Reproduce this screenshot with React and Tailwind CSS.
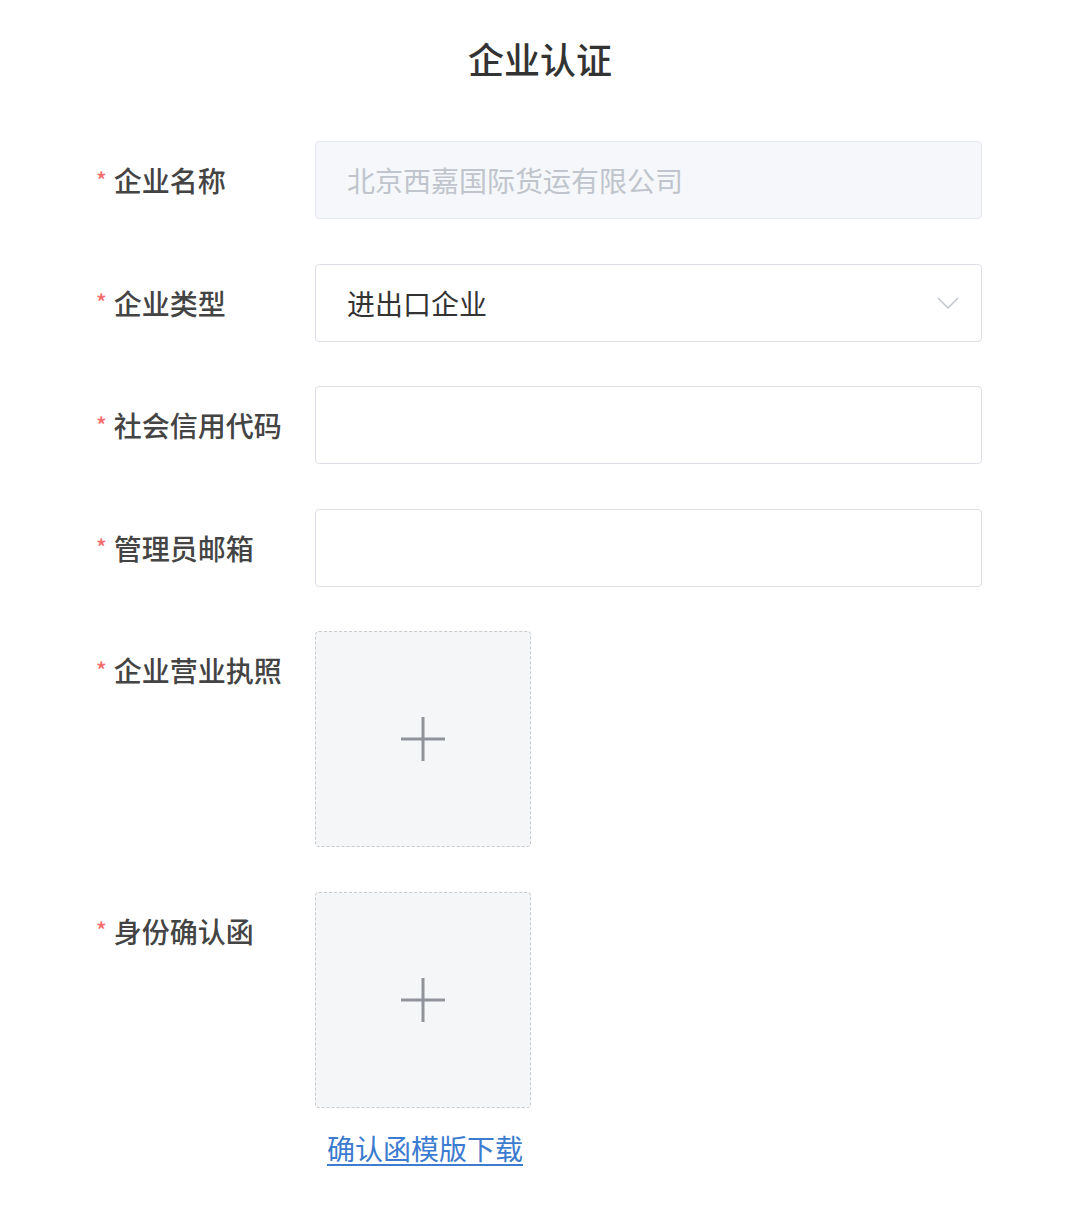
import React from 'react';

const font = { fontFamily: '"Noto Sans CJK SC", "Noto Sans", sans-serif' };

function Label({ children }) {
  return (
    <div className="w-[219px] shrink-0 h-[78px] flex items-center text-[28px] text-[#444] font-medium">
      <span className="text-[#f56c6c] text-[22px] mr-[7px] -mt-[2px]">*</span>
      {children}
    </div>
  );
}

function Upload() {
  return (
    <div className="w-[216px] h-[216px] bg-[#f5f6f8] border border-dashed border-[#c8cbd0] rounded-[4px] flex items-center justify-center">
      <svg width="46" height="46" viewBox="0 0 46 46">
        <path d="M23 1v44M1 23h44" stroke="#909399" strokeWidth="3" fill="none" />
      </svg>
    </div>
  );
}

export default function App() {
  return (
    <div className="w-[1080px] min-h-[1212px] bg-white" style={font}>
      <h1 className="text-center text-[36px] text-[#333] pt-[35px] leading-[46px] font-medium">企业认证</h1>

      <div className="pl-[96px] pt-[60px] flex flex-col gap-[44.6px]">
        <div className="flex">
          <Label>企业名称</Label>
          <div className="w-[667px] h-[78px] bg-[#f5f7fa] border border-[#e4e7ed] rounded-[4px] flex items-center pl-[31px] text-[28px] text-[#c0c4cc]">
            北京西嘉国际货运有限公司
          </div>
        </div>

        <div className="flex">
          <Label>企业类型</Label>
          <div className="w-[667px] h-[78px] border border-[#dcdfe6] rounded-[4px] flex items-center justify-between pl-[31px] pr-[22px] text-[28px] text-[#333]">
            <span>进出口企业</span>
            <svg width="22" height="14" viewBox="0 0 22 14">
              <path d="M1 2l10 10 10-10" stroke="#c0c4cc" strokeWidth="1.5" fill="none" />
            </svg>
          </div>
        </div>

        <div className="flex">
          <Label>社会信用代码</Label>
          <div className="w-[667px] h-[78px] border border-[#dcdfe6] rounded-[4px]" />
        </div>

        <div className="flex">
          <Label>管理员邮箱</Label>
          <div className="w-[667px] h-[78px] border border-[#dcdfe6] rounded-[4px]" />
        </div>

        <div className="flex items-start">
          <Label>企业营业执照</Label>
          <Upload />
        </div>

        <div className="flex items-start">
          <Label>身份确认函</Label>
          <div className="flex flex-col">
            <Upload />
            <a href="#" className="mt-[20px] ml-[12px] text-[28px] leading-[40px] text-[#3b7bd0] underline underline-offset-[4px]">
              确认函模版下载
            </a>
          </div>
        </div>
      </div>
    </div>
  );
}
